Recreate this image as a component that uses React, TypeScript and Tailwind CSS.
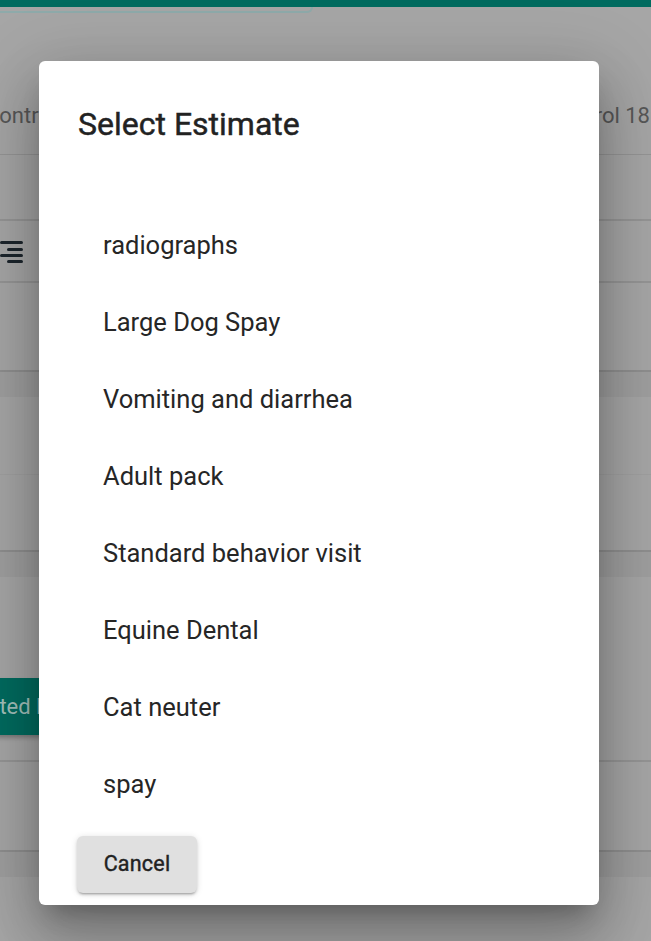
const estimates = [
  'radiographs',
  'Large Dog Spay',
  'Vomiting and diarrhea',
  'Adult pack',
  'Standard behavior visit',
  'Equine Dental',
  'Cat neuter',
  'spay',
]

function SortIcon() {
  return (
    <svg width="23" height="23" viewBox="0 0 23 23" className="block">
      <rect x="0" y="1" width="23" height="3" rx="1.5" fill="#1c252c" />
      <rect x="7" y="8" width="16" height="3" rx="1.5" fill="#1c252c" />
      <rect x="0" y="14" width="23" height="3" rx="1.5" fill="#1c252c" />
      <rect x="7" y="20" width="16" height="3" rx="1.5" fill="#1c252c" />
    </svg>
  )
}

function Backdrop() {
  return (
    <div className="flex flex-col w-full">
      <div className="h-[7px] bg-[#006b5f]" />
      <div className="h-[6px] w-[313px] border-b-2 border-r-2 border-[#8eaaaa] rounded-br-[6px]" />
      <div className="h-[142px] flex items-end pb-[22px] overflow-hidden whitespace-nowrap text-[22px] text-[#575757] border-b border-[#959595]">
        <span className="ml-[-15px]">Control</span>
        <span className="ml-auto mr-[1px]">Control 18</span>
      </div>
      <div className="h-[66px] border-b-2 border-[#959595]" />
      <div className="h-[62px] flex items-center border-b-2 border-[#959595]">
        <SortIcon />
      </div>
      <div className="h-[89px] border-b-2 border-[#8f8f8f]" />
      <div className="h-[25px] bg-[#9f9f9f]" />
      <div className="h-[78px] border-b border-[#a0a0a0]" />
      <div className="h-[77px] border-b-2 border-[#8f8f8f]" />
      <div className="h-[25px] bg-[#9f9f9f]" />
      <div className="h-[185px] flex flex-col justify-end pb-[25px] border-b-2 border-[#959595] overflow-hidden">
        <div className="h-[57px] w-fit ml-[-76px] px-[6px] bg-[#006b5f] rounded-[6px] flex items-center whitespace-nowrap text-[22px] text-[#a3c0bb] shadow-[0_3px_4px_rgba(0,0,0,0.25)]">
          Submitted Estimate
        </div>
      </div>
      <div className="h-[90px] border-b-2 border-[#8f8f8f]" />
      <div className="h-[25px] bg-[#9f9f9f]" />
    </div>
  )
}

export default function App() {
  return (
    <div
      className="relative w-full h-[941px] overflow-hidden bg-[#a6a6a6]"
      style={{ fontFamily: 'Roboto, "Liberation Sans", sans-serif' }}
    >
      <Backdrop />

      <div className="absolute left-[39px] top-[61px] w-[560px] h-[844px] bg-white rounded-[6px] flex flex-col shadow-[0_16px_22px_-10px_rgba(0,0,0,0.25),0_36px_57px_5px_rgba(0,0,0,0.18),0_14px_69px_12px_rgba(0,0,0,0.14)]">
        <h2 className="mt-[38px] px-[39px] h-[51px] leading-[51px] text-[32px] font-normal text-[#222222] [-webkit-text-stroke:0.45px_#222222]">
          Select Estimate
        </h2>

        <ul className="mt-[57px] flex flex-col">
          {estimates.map((name) => (
            <li
              key={name}
              className="h-[77px] leading-[77px] pl-[64px] text-[25.5px] text-[#262626]"
            >
              {name}
            </li>
          ))}
        </ul>

        <div className="mt-[13px] pl-[38px]">
          <button className="h-[57px] w-[120px] rounded-[6px] bg-[#e0e0e0] text-[21.5px] font-normal tracking-[0.01em] text-[#222222] [-webkit-text-stroke:0.4px_#222222] shadow-[0_3px_2px_-2px_rgba(0,0,0,0.2),0_2px_3px_0_rgba(0,0,0,0.14),0_1px_7px_0_rgba(0,0,0,0.12)]">
            Cancel
          </button>
        </div>
      </div>
    </div>
  )
}
